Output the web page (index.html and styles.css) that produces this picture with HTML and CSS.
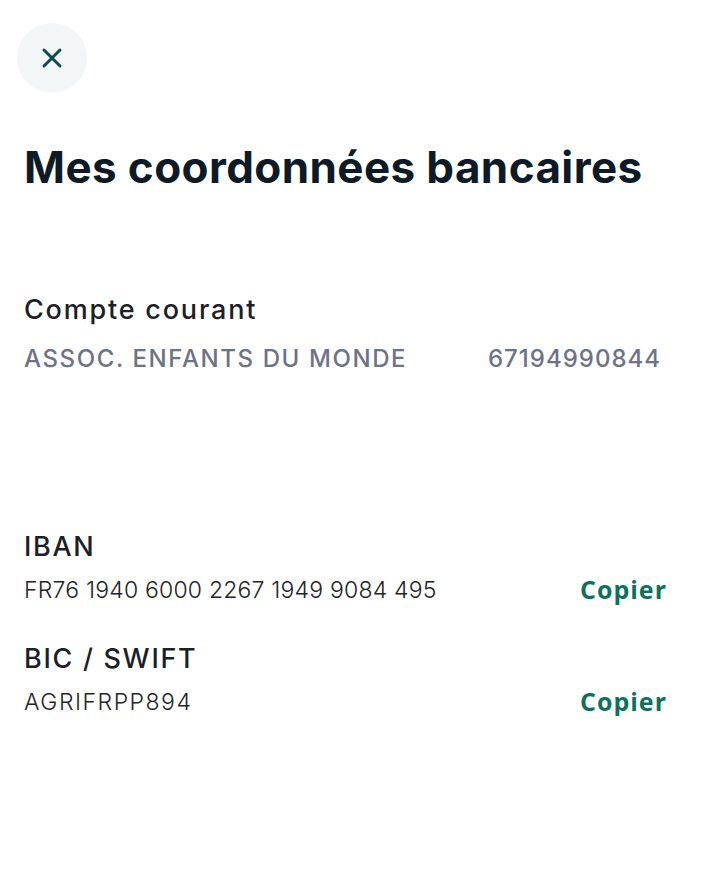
FILE: index.html
```html
<!DOCTYPE html>
<html lang="fr">
<head>
  <meta charset="UTF-8">
  <title>Mes coordonnées bancaires</title>
  <meta name="viewport" content="width=device-width, initial-scale=1.0">
  <link rel="stylesheet" href="styles.css">
</head>
<body>
  <header class="topbar">
    <button class="close-btn" aria-label="Fermer">
      <svg width="22" height="22" viewBox="0 0 22 22">
        <path d="M3 3 L19 19 M19 3 L3 19" stroke="#0d4a55" stroke-width="3" stroke-linecap="round" fill="none"/>
      </svg>
    </button>
  </header>

  <h1 class="title">Mes coordonnées bancaires</h1>

  <section class="account">
    <h2 class="account-type">Compte courant</h2>
    <div class="account-row">
      <span class="account-name">ASSOC. ENFANTS DU MONDE</span>
      <span class="account-number">67194990844</span>
    </div>
  </section>

  <section class="details">
    <div class="detail">
      <div class="detail-text">
        <h3 class="detail-label">IBAN</h3>
        <p class="detail-value">FR76 1940 6000 2267 1949 9084 495</p>
      </div>
      <button class="copy-btn">Copier</button>
    </div>
    <div class="detail">
      <div class="detail-text">
        <h3 class="detail-label">BIC / SWIFT</h3>
        <p class="detail-value bic">AGRIFRPP894</p>
      </div>
      <button class="copy-btn">Copier</button>
    </div>
  </section>
</body>
</html>
```

FILE: styles.css
```css
body {
  margin: 0;
  padding: 0 35px 0 24px;
  background-color: #ffffff;
  color: #1b2028;
  font-family: 'Inter', sans-serif;
}

.topbar {
  padding-top: 23px;
  margin-left: -7px;
}

.close-btn {
  width: 70px;
  height: 70px;
  border: none;
  border-radius: 50%;
  background-color: #f3f6f7;
  display: flex;
  align-items: center;
  justify-content: center;
  padding: 0;
}

.title {
  margin: 48px 0 0;
  font-size: 44px;
  line-height: 52px;
  font-weight: 700;
  color: #0e1a26;
  letter-spacing: 0.4px;
}

.account {
  margin-top: 101px;
}

.account-type {
  margin: 0;
  font-size: 27px;
  line-height: 32px;
  font-weight: 500;
  color: #1b2028;
  letter-spacing: 1.8px;
}

.account-row {
  margin-top: 19px;
  display: flex;
  justify-content: space-between;
  padding-right: 6px;
  font-size: 24px;
  line-height: 28px;
  font-weight: 500;
  color: #6c7287;
}

.account-name {
  letter-spacing: 1.6px;
}

.account-number {
  letter-spacing: 1px;
  margin-right: -1px;
}

.details {
  margin-top: 158px;
  display: flex;
  flex-direction: column;
  gap: 39px;
}

.detail {
  display: flex;
  justify-content: space-between;
  align-items: flex-end;
}

.detail-label {
  margin: 0;
  font-size: 27px;
  line-height: 32px;
  font-weight: 500;
  color: #1b2028;
  letter-spacing: 1.7px;
}

.detail-value {
  margin: 13px 0 0;
  font-size: 23px;
  line-height: 28px;
  font-weight: 300;
  color: #222428;
  letter-spacing: 0.2px;
}

.detail-value.bic {
  letter-spacing: 1.5px;
}

.copy-btn {
  border: none;
  background: none;
  padding: 0;
  font-family: 'Open Sans', sans-serif;
  font-size: 25px;
  line-height: 28px;
  font-weight: 700;
  color: #0c725d;
  letter-spacing: 1px;
  margin-right: -1px;
  margin-bottom: 1px;
}
```
